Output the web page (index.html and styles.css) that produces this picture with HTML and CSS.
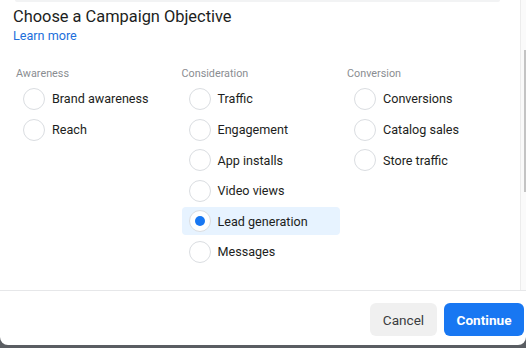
FILE: index.html
```html
<!DOCTYPE html>
<html lang="en">
<head>
  <meta charset="UTF-8" />
  <meta name="viewport" content="width=device-width, initial-scale=1.0"/>
  <title>Choose a Campaign Objective</title>
  <link rel="stylesheet" href="styles.css">
</head>
<body>

  <div class="modal">
    <div class="modal-body">
      <div class="scroll-content">
        <div class="top-shadow"></div>
        <h2 class="title">Choose a Campaign Objective</h2>
        <a class="learn-more" href="#">Learn more</a>

        <div class="objectives">
          <div class="column">
            <div class="column-label">Awareness</div>
            <label class="option"><span class="radio"></span>Brand awareness</label>
            <label class="option"><span class="radio"></span>Reach</label>
          </div>
          <div class="column">
            <div class="column-label">Consideration</div>
            <label class="option"><span class="radio"></span>Traffic</label>
            <label class="option"><span class="radio"></span>Engagement</label>
            <label class="option"><span class="radio"></span>App installs</label>
            <label class="option"><span class="radio"></span>Video views</label>
            <label class="option selected"><span class="radio"></span>Lead generation</label>
            <label class="option"><span class="radio"></span>Messages</label>
          </div>
          <div class="column">
            <div class="column-label">Conversion</div>
            <label class="option"><span class="radio"></span>Conversions</label>
            <label class="option"><span class="radio"></span>Catalog sales</label>
            <label class="option"><span class="radio"></span>Store traffic</label>
          </div>
        </div>
      </div>
      <div class="scrollbar">
        <div class="scrollbar-thumb"></div>
      </div>
    </div>

    <div class="modal-footer">
      <button class="btn btn-cancel">Cancel</button>
      <button class="btn btn-continue">Continue</button>
    </div>
  </div>

</body>
</html>
```

FILE: styles.css
```css
body {
  margin: 0;
  padding: 0;
  width: 526px;
  height: 348px;
  background-color: #5a5d62;
  font-family: Roboto, "Liberation Sans", sans-serif;
  color: #1c1e21;
  overflow: hidden;
}

.modal {
  width: 526px;
  height: 345px;
  background: #fff;
  border-radius: 0 0 8px 8px;
  display: flex;
  flex-direction: column;
  overflow: hidden;
}

.modal-body {
  display: flex;
  height: 290px;
}

.scroll-content {
  flex: 1;
}

.top-shadow {
  height: 2px;
  margin: 0 20px 0 15px;
  background: #f2f3f4;
  border-radius: 0 0 2px 2px;
}

.title {
  margin: 5px 0 0 13px;
  font-size: 16.4px;
  font-weight: 400;
  line-height: 20px;
  color: #1c1e21;
}

.learn-more {
  display: block;
  margin: 1px 0 0 13px;
  font-size: 12.6px;
  line-height: 16px;
  color: #216fdb;
  text-decoration: none;
  width: max-content;
}

.objectives {
  display: grid;
  grid-template-columns: 158px 158px 158px;
  column-gap: 7.5px;
  margin: 24px 0 0 16px;
}

.column {
  display: flex;
  flex-direction: column;
  gap: 2.6px;
}

.column-label {
  font-size: 10.8px;
  line-height: 12.5px;
  color: #8a8d91;
  margin-bottom: 1.9px;
}

.option {
  display: flex;
  align-items: center;
  gap: 7px;
  height: 28px;
  padding-left: 7px;
  border-radius: 4px;
  font-size: 12.6px;
  color: #1c1e21;
  cursor: pointer;
}

.option.selected {
  background: #e7f3ff;
}

.radio {
  width: 20px;
  height: 20px;
  border: 1px solid #dadde1;
  border-radius: 50%;
  background: #fff;
  display: flex;
  align-items: center;
  justify-content: center;
}

.option.selected .radio::after {
  content: "";
  width: 10px;
  height: 10px;
  border-radius: 50%;
  background: #1877f2;
}

.scrollbar {
  width: 5px;
  border-left: 1px solid #ececec;
  background: #fafafa;
  display: flex;
  justify-content: flex-end;
}

.scrollbar-thumb {
  width: 2px;
  height: 142px;
  margin-top: 50px;
  background: #c4c4c4;
}

.modal-footer {
  border-top: 1px solid #e6e7e9;
  display: flex;
  justify-content: flex-end;
  gap: 7px;
  padding: 12px 2px 0 0;
}

.btn {
  height: 33px;
  border: none;
  border-radius: 6px;
  font-family: Roboto, "Liberation Sans", sans-serif;
  font-size: 13.6px;
  padding: 0;
  cursor: pointer;
}

.btn-cancel {
  width: 67px;
  background: #f0f0f0;
  color: #3b3d40;
}

.btn-continue {
  width: 80px;
  background: #1877f2;
  color: #fff;
  font-weight: 700;
}
```
